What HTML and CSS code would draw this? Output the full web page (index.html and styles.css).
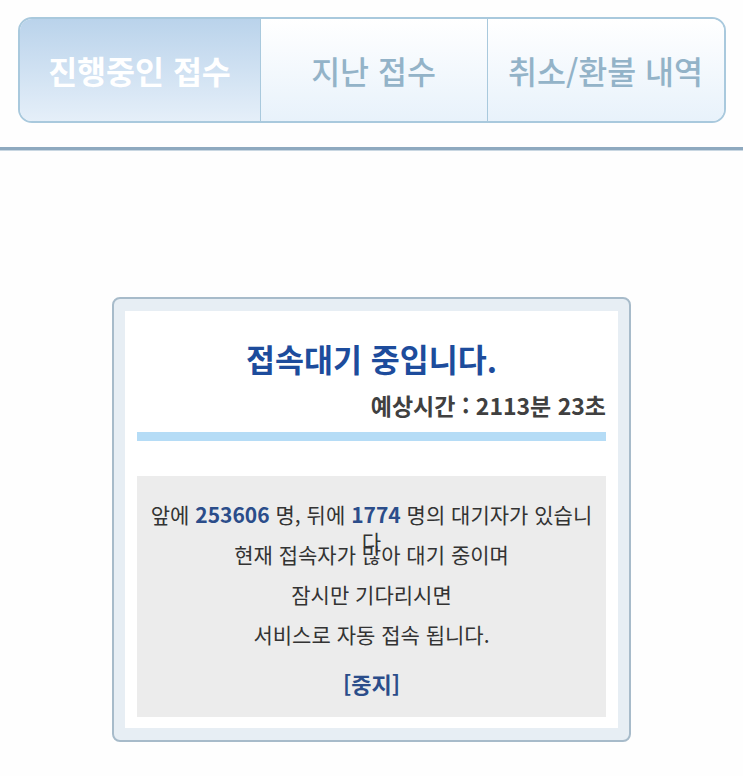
FILE: index.html
```html
<!DOCTYPE html>
<html lang="ko">
<head>
<meta charset="utf-8">
<link rel="stylesheet" href="styles.css">
</head>
<body>
<nav class="tabs">
  <div class="tab tab-active">진행중인 접수</div>
  <div class="tab tab-mid">지난 접수</div>
  <div class="tab tab-last">취소/환불 내역</div>
</nav>
<div class="rule"></div>
<section class="card">
  <div class="panel">
    <h1 class="title">접속대기 중입니다.</h1>
    <div class="eta">예상시간 : 2113분 23초</div>
    <div class="bar"></div>
    <div class="info">
      <p class="line line-first">앞에 <b class="num">253606</b> 명, 뒤에 <b class="num">1774</b> 명의 대기자가 있습니<br>다</p>
      <p class="line">현재 접속자가 많아 대기 중이며</p>
      <p class="line">잠시만 기다리시면</p>
      <p class="line">서비스로 자동 접속 됩니다.</p>
      <p class="stop">[중지]</p>
    </div>
  </div>
</section>
</body>
</html>
```
FILE: styles.css
```css
html, body {
  margin: 0;
  padding: 0;
  background: #fefefe;
  font-family: "Noto Sans CJK KR", "Noto Sans", sans-serif;
}
.tabs {
  display: flex;
  width: 708px;
  height: 106px;
  box-sizing: border-box;
  margin: 17px auto 0;
  border: 2px solid #a9c9dd;
  border-radius: 14px;
  overflow: hidden;
}
.tab {
  display: flex;
  align-items: center;
  justify-content: center;
  font-size: 31.5px;
  font-weight: 500;
  color: #93b3c8;
  background: linear-gradient(#ffffff, #e8f2fb);
}
.tab-active {
  width: 240px;
  background: linear-gradient(#bad3eb, #e5eff9);
  color: #ffffff;
  font-weight: 700;
  border-right: 1px solid #a9c9dd;
}
.tab-mid {
  width: 226px;
  border-right: 1px solid #a9c9dd;
}
.tab-last {
  flex: 1;
}
.rule {
  margin-top: 24px;
  height: 3px;
  background: #8ea9bf;
  border-bottom: 1px solid #c9d7e2;
}
.card {
  width: 519px;
  box-sizing: border-box;
  margin: 146px auto 0;
  padding: 12px 11px;
  border: 2px solid #a7bbca;
  border-radius: 8px;
  background: #e7eef4;
}
.panel {
  background: #ffffff;
  padding: 28px 12px 11px;
}
.title {
  margin: 0;
  text-align: center;
  font-size: 31.5px;
  line-height: 38px;
  font-weight: 700;
  color: #1d4c9c;
}
.eta {
  margin-top: 13px;
  text-align: right;
  font-size: 23px;
  line-height: 30px;
  font-weight: 700;
  color: #404040;
}
.bar {
  margin-top: 12px;
  height: 9px;
  background: #b5dcf6;
}
.info {
  margin-top: 35px;
  background: #ececec;
  padding: 25px 0 20px;
  text-align: center;
}
.line {
  margin: 0 0 13px;
  height: 27px;
  font-size: 21px;
  line-height: 27px;
  color: #333333;
}
.num {
  font-weight: 700;
  color: #2b4d8a;
}
.stop {
  margin: 22px 0 0;
  font-size: 22px;
  line-height: 27px;
  font-weight: 700;
  color: #2b4d8a;
}
```
